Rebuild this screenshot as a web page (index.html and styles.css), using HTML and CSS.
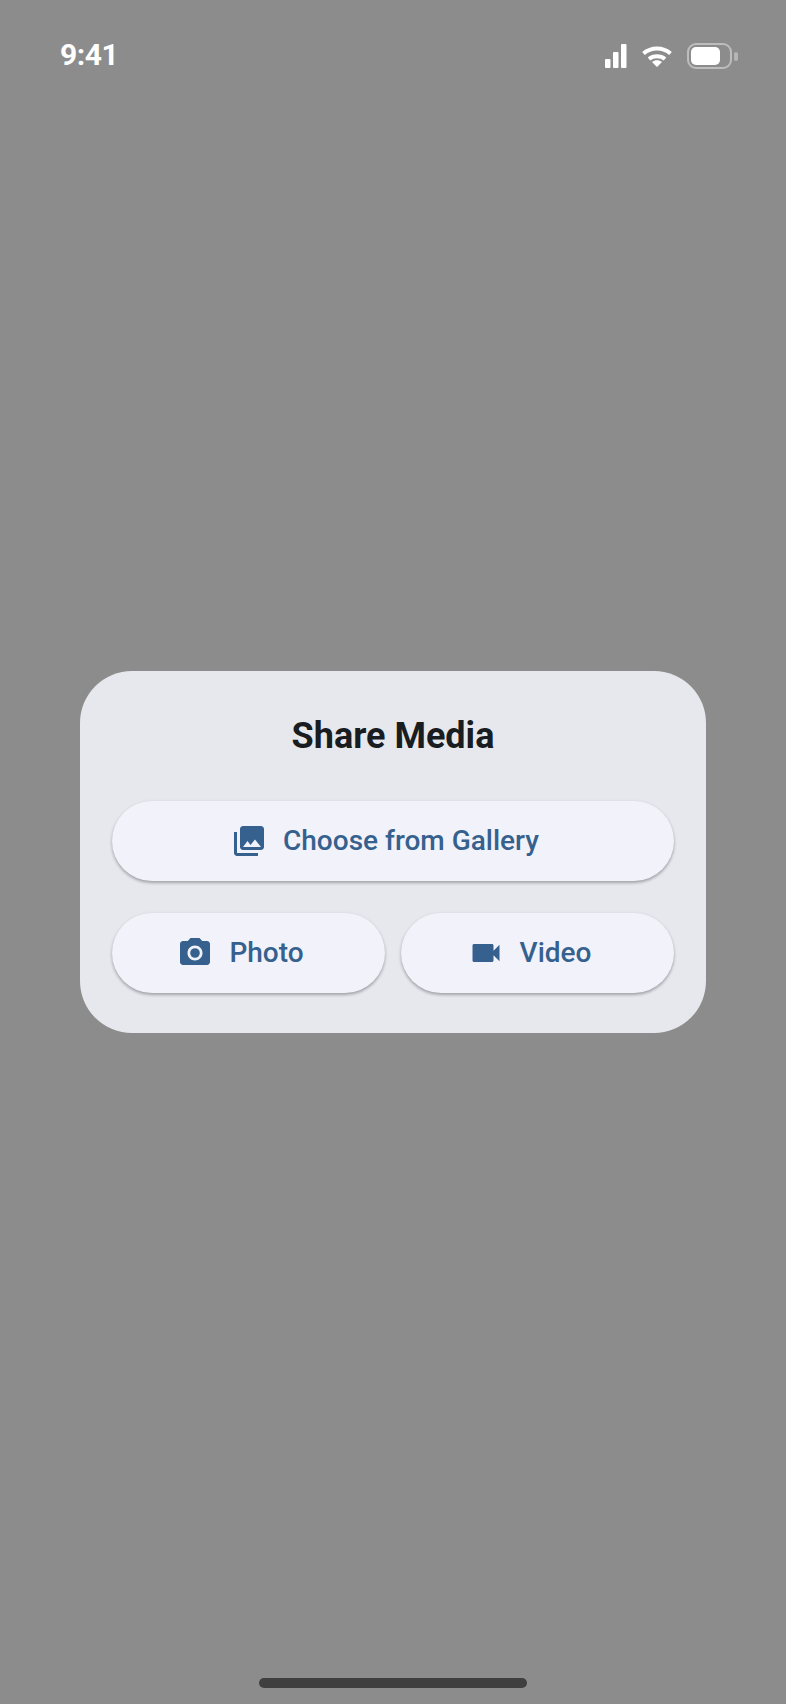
FILE: index.html
```html
<!DOCTYPE html>
<html>
<head>
<meta charset="UTF-8">
<title>Share Media</title>
<link rel="stylesheet" href="styles.css">
</head>
<body>
<div class="screen">
	<div class="status_bar">
		<span class="status_time">9:41</span>
		<div class="status_icons">
			<svg class="icon_signal" width="22" height="24" viewBox="0 0 22 24"><rect x="0" y="15" width="5.5" height="9" rx="1" /><rect x="8" y="8" width="5.5" height="16" rx="1" /><rect x="16" y="0" width="5.5" height="24" rx="1" /></svg>
			<svg class="icon_wifi" width="30" height="21" viewBox="0 0 30 21"><path d="M1.5 7.5C9 .8 21 .8 28.5 7.5" /><path d="M7 13C11.5 9.2 18.5 9.2 23 13" /><path class="wifi_dot" d="M15 21l-5-5c2.8-2.2 7.2-2.2 10 0z" /></svg>
			<div class="battery">
				<div class="battery_body"><div class="battery_level"></div></div>
				<div class="battery_cap"></div>
			</div>
		</div>
	</div>

	<div class="dialog">
		<h1 class="dialog_title">Share Media</h1>
		<div class="dialog_actions">
			<div class="action_btn action_wide">
				<svg class="action_icon" viewBox="0 0 24 24"><path d="M22 16V4c0-1.1-.9-2-2-2H8c-1.100 0-2 .9-2 2v12c0 1.100.9 2 2 2h12c1.100 0 2-.9 2-2zm-11-4l2.030 2.710L16 11l4 5H8l3-4zM2 6v14c0 1.100.9 2 2 2h14v-2H4V6H2z" /></svg>
				<span class="action_label">Choose from Gallery</span>
			</div>
			<div class="action_btn">
				<svg class="action_icon" viewBox="0 0 24 24"><circle cx="12" cy="12" r="3.2" /><path d="M9 2L7.170 4H4c-1.100 0-2 .9-2 2v12c0 1.100.9 2 2 2h16c1.100 0 2-.9 2-2V6c0-1.100-.9-2-2-2h-3.170L15 2H9zm3 15c-2.760 0-5-2.240-5-5s2.240-5 5-5 5 2.240 5 5-2.240 5-5 5z" /></svg>
				<span class="action_label">Photo</span>
			</div>
			<div class="action_btn">
				<svg class="action_icon" viewBox="0 0 24 24"><path d="M17 10.500V7c0-.55-.45-1-1-1H4c-.55 0-1 .45-1 1v10c0 .55.45 1 1 1h12c.55 0 1-.45 1-1v-3.500l4 4v-11l-4 4z" /></svg>
				<span class="action_label">Video</span>
			</div>
		</div>
	</div>

	<div class="home_row"><div class="home_bar"></div></div>
</div>
</body>
</html>
```

FILE: styles.css
```css
html, body { margin:0; padding:0; }
body { background:#8c8c8c; font-family:Roboto, "Liberation Sans", sans-serif; }

.screen { width:786px; height:1704px; display:grid; grid-template-rows:1fr auto 1fr; }

.status_bar { display:flex; justify-content:space-between; align-items:flex-start; padding:38px 48px 0 60px; color:#fff; }
.status_time { font-size:30px; line-height:34px; font-weight:700; letter-spacing:-0.5px; }
.status_icons { display:flex; align-items:center; gap:15px; margin-top:5px; }
.icon_signal { fill:#fff; display:block; }
.icon_wifi { display:block; fill:none; stroke:#fff; stroke-width:4; }
.icon_wifi .wifi_dot { fill:#fff; stroke:none; }
.battery { display:flex; align-items:center; gap:2px; }
.battery_body { width:45px; height:26px; box-sizing:border-box; padding:2px; border:2px solid #bdbdbd; border-radius:9px; }
.battery_level { width:29px; height:100%; background:#fff; border-radius:5px; }
.battery_cap { width:4px; height:9px; background:#b5b5b5; border-radius:2px; }

.dialog { margin:0 80px; padding:32px 32px 40px; background:#e7e8ee; border-radius:52px; }
.dialog_title { margin:0 0 32px; font-size:36px; line-height:66px; font-weight:700; color:#191c20; text-align:center; }
.dialog_actions { display:grid; grid-template-columns:1fr 1fr; gap:32px 16px; }

.action_btn { height:80px; display:flex; align-items:center; justify-content:center; gap:16px; background:#f2f3fa; border-radius:40px; box-shadow:0 2px 3px rgba(0,0,0,.25), 0 1px 4px rgba(0,0,0,.08); color:#36618e; }
.action_wide { grid-column:1 / 3; }
.action_icon { width:36px; height:36px; fill:#36618e; flex:none; }
.action_label { font-size:28px; line-height:36px; font-weight:500; padding-right:16px; }

.home_row { display:flex; align-items:flex-end; justify-content:center; padding-bottom:16px; }
.home_bar { width:268px; height:10px; background:#3f3f3f; border-radius:5px; }
```
